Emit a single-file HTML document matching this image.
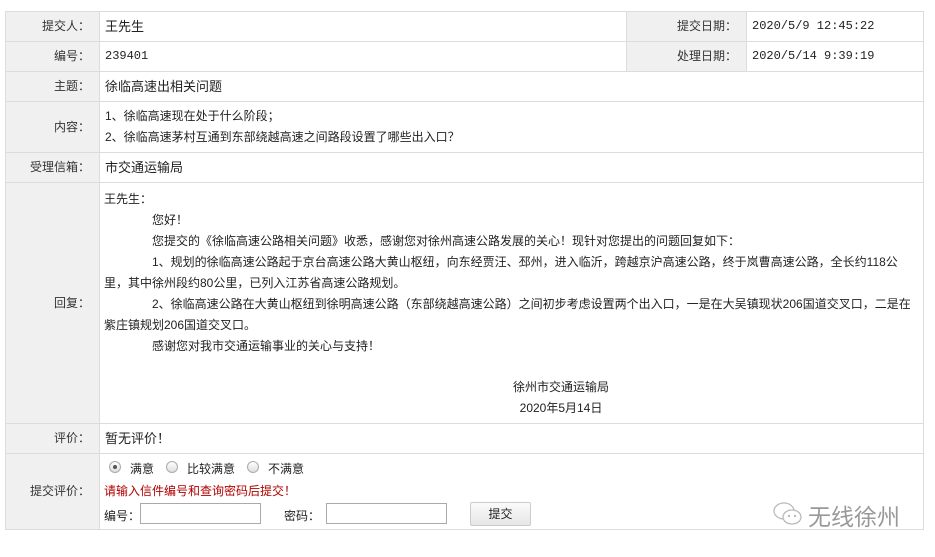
<!DOCTYPE html>
<html><head><meta charset="utf-8"><style>
body{margin:0;width:935px;height:557px;background:#fff;font-family:"Liberation Sans","Noto Sans CJK SC","WenQuanYi Zen Hei",sans-serif;font-size:12px;color:#222;position:relative;overflow:hidden}
.c{position:absolute;box-sizing:border-box;border:1px solid #dcdcdc;white-space:nowrap}
.l{background:#f0f0f0;text-align:right;padding-right:9px;font-size:12px;color:#333}
.v{background:#fff;padding-left:5px}
.t{position:absolute;white-space:nowrap}
.m{font-family:"Liberation Mono","Noto Sans CJK SC",monospace;font-size:12px}
.in{position:absolute;border:1px solid #aaa;width:119px;height:19px;background:#fff}
.rd{position:absolute;width:10px;height:10px;border-radius:50%;border:1px solid #aaa;background:linear-gradient(#fff,#ddd)}
</style></head><body>
<div class="c l" style="left:5px;top:11px;width:95px;height:31px;line-height:29px">提交人：</div>
<div class="c v" style="left:99px;top:11px;width:528px;height:31px;line-height:29px;font-size:13px">王先生</div>
<div class="c l" style="left:626px;top:11px;width:121px;height:31px;line-height:29px">提交日期：</div>
<div class="c v m" style="left:746px;top:11px;width:178px;height:31px;line-height:29px">2020/5/9 12:45:22</div>
<div class="c l" style="left:5px;top:41px;width:95px;height:31px;line-height:29px">编号：</div>
<div class="c v m" style="left:99px;top:41px;width:528px;height:31px;line-height:29px">239401</div>
<div class="c l" style="left:626px;top:41px;width:121px;height:31px;line-height:29px">处理日期：</div>
<div class="c v m" style="left:746px;top:41px;width:178px;height:31px;line-height:29px">2020/5/14 9:39:19</div>
<div class="c l" style="left:5px;top:71px;width:95px;height:31px;line-height:29px">主题：</div>
<div class="c v" style="left:99px;top:71px;width:825px;height:31px;line-height:29px;font-size:13px">徐临高速出相关问题</div>
<div class="c l" style="left:5px;top:101px;width:95px;height:52px;line-height:50px">内容：</div>
<div class="c v" style="left:99px;top:101px;width:825px;height:52px;padding-top:4px;line-height:21px">1、徐临高速现在处于什么阶段；<br>2、徐临高速茅村互通到东部绕越高速之间路段设置了哪些出入口？</div>
<div class="c l" style="left:5px;top:152px;width:95px;height:31px;line-height:29px">受理信箱：</div>
<div class="c v" style="left:99px;top:152px;width:825px;height:31px;line-height:29px;font-size:13px">市交通运输局</div>
<div class="c l" style="left:5px;top:182px;width:95px;height:242px;line-height:240px">回复：</div>
<div class="c v" style="left:99px;top:182px;width:825px;height:242px"></div>
<div class="t" style="left:104px;top:189px;line-height:21px">王先生：<br>
<span style="padding-left:48px">您好！</span><br>
<span style="padding-left:48px">您提交的《徐临高速公路相关问题》收悉，感谢您对徐州高速公路发展的关心！现针对您提出的问题回复如下：</span><br>
<span style="padding-left:48px">1、规划的徐临高速公路起于京台高速公路大黄山枢纽，向东经贾汪、邳州，进入临沂，跨越京沪高速公路，终于岚曹高速公路，全长约118公</span><br>
里，其中徐州段约80公里，已列入江苏省高速公路规划。<br>
<span style="padding-left:48px">2、徐临高速公路在大黄山枢纽到徐明高速公路（东部绕越高速公路）之间初步考虑设置两个出入口，一是在大吴镇现状206国道交叉口，二是在</span><br>
紫庄镇规划206国道交叉口。<br>
<span style="padding-left:48px">感谢您对我市交通运输事业的关心与支持！</span></div>
<div class="t" style="left:511px;top:377px;line-height:21px;text-align:center;width:100px">徐州市交通运输局<br>2020年5月14日</div>
<div class="c l" style="left:5px;top:423px;width:95px;height:31px;line-height:29px">评价：</div>
<div class="c v" style="left:99px;top:423px;width:825px;height:31px;line-height:29px;font-size:13px">暂无评价！</div>
<div class="c l" style="left:5px;top:453px;width:95px;height:77px;line-height:75px">提交评价：</div>
<div class="c v" style="left:99px;top:453px;width:825px;height:77px"></div>
<div class="rd" style="left:109px;top:461px"></div><div style="position:absolute;left:113px;top:465px;width:4px;height:4px;border-radius:50%;background:#555"></div>
<div class="t" style="left:130px;top:460px">满意</div>
<div class="rd" style="left:166px;top:461px"></div>
<div class="t" style="left:187px;top:460px">比较满意</div>
<div class="rd" style="left:247px;top:461px"></div>
<div class="t" style="left:268px;top:460px">不满意</div>
<div class="t" style="left:104px;top:482px;color:#b00000">请输入信件编号和查询密码后提交！</div>
<div class="t" style="left:104px;top:507px">编号：</div>
<div class="in" style="left:140px;top:503px"></div>
<div class="t" style="left:284px;top:507px">密码：</div>
<div class="in" style="left:326px;top:503px"></div>
<div style="position:absolute;left:470px;top:502px;width:59px;height:22px;border:1px solid #ccc;border-radius:2px;background:linear-gradient(#fafafa,#e6e6e6);text-align:center;line-height:22px">提交</div>
<svg style="position:absolute;left:772px;top:499px" width="32" height="30" viewBox="0 0 32 30"><g fill="none" stroke="#bbb" stroke-width="1.3"><ellipse cx="12" cy="12" rx="10" ry="8"/><ellipse cx="20" cy="18" rx="9" ry="7" fill="#fff"/></g><circle cx="17" cy="17" r="1.2" fill="#bbb"/><circle cx="23" cy="17" r="1.2" fill="#bbb"/></svg>
<div class="t" style="left:808px;top:498px;font-size:23px;color:#999;letter-spacing:0px">无线徐州</div>
</body></html>
